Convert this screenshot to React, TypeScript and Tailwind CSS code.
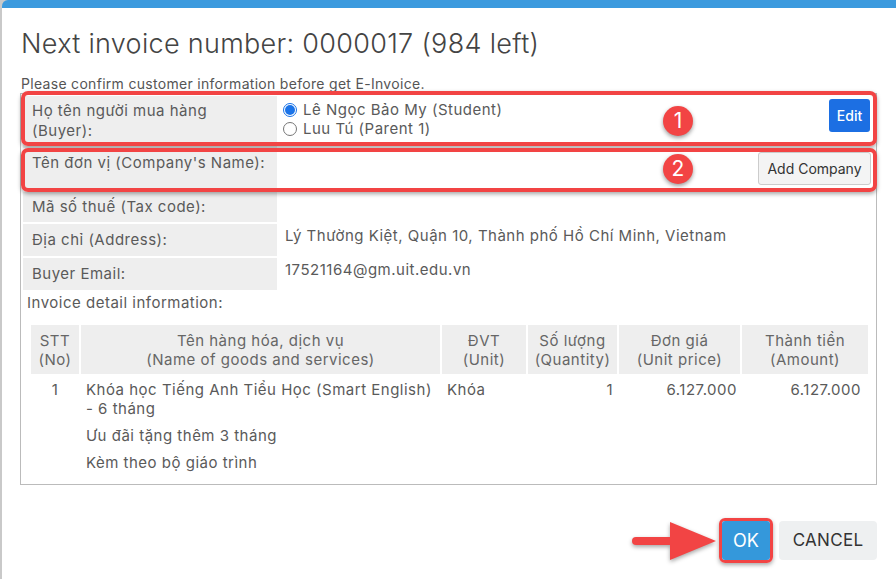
const red = "border-[#f24444]";

function InfoRow({
  label,
  children,
  className,
  labelClass,
}: {
  label: React.ReactNode;
  children?: React.ReactNode;
  className: string;
  labelClass: string;
}) {
  return (
    <div className={`flex ${className}`}>
      <div className={`w-[254px] shrink-0 bg-[#eeeeee] pl-[9px] leading-[20px] ${labelClass}`}>
        {label}
      </div>
      <div className="flex-1">{children}</div>
    </div>
  );
}

function Radio({ checked, label }: { checked?: boolean; label: string }) {
  return (
    <label className="flex items-center gap-[6px] leading-[19px]">
      {checked ? (
        <span className="flex h-[14px] w-[14px] items-center justify-center rounded-full border border-[#1a73e8] bg-white">
          <span className="h-[10px] w-[10px] rounded-full bg-[#1a73e8]" />
        </span>
      ) : (
        <span className="h-[14px] w-[14px] rounded-full border border-[#767676] bg-white" />
      )}
      {label}
    </label>
  );
}

function Arrow() {
  return (
    <svg width="88" height="44" viewBox="0 0 88 44" className="drop-shadow-[0_2px_2px_rgba(0,0,0,0.35)]">
      <rect x="2" y="18" width="50" height="8" rx="4" fill="#f24444" />
      <polygon points="40,3 86,22 40,41" fill="#f24444" />
    </svg>
  );
}

export default function App() {
  const headers = [
    { w: "w-[48px]", a: "STT", b: "(No)" },
    { w: "w-[359px]", a: "Tên hàng hóa, dịch vụ", b: "(Name of goods and services)" },
    { w: "w-[84px]", a: "ĐVT", b: "(Unit)" },
    { w: "w-[89px]", a: "Số lượng", b: "(Quantity)" },
    { w: "w-[121px]", a: "Đơn giá", b: "(Unit price)" },
    { w: "w-[126px]", a: "Thành tiền", b: "(Amount)" },
  ];

  return (
    <div className="relative flex h-[579px] w-[896px] overflow-hidden bg-[#c9c9c9] font-['Inter',sans-serif] text-[#5a5a5a]">
      <div className="ml-[2px] flex-1 rounded-tl-[6px] border-t-[8px] border-[#3c9ade] bg-white">
        <h1 className="mt-[19px] pl-[19px] text-[27px] font-light leading-[33px] tracking-[0.3px] text-[#444]">
          Next invoice number: 0000017 (984 left)
        </h1>
        <p className="mt-[16px] pl-[19px] text-[14px] leading-[16px] tracking-[0.3px] text-[#555]">
          Please confirm customer information before get E-Invoice.
        </p>

        <div className="mt-[1px] ml-[18px] w-[857px] border border-[#bbbbbb] p-[2px] text-[15px] tracking-[0.5px]">
          <div className="flex flex-col gap-[2px]">
            <InfoRow className="h-[52px]" labelClass="pt-[5px]" label={<>Họ tên người mua hàng<br />(Buyer):</>}>
              <div className="flex justify-between">
                <div className="pl-[6px] pt-[4px]">
                  <Radio checked label="Lê Ngọc Bảo My (Student)" />
                  <Radio label="Luu Tú (Parent 1)" />
                </div>
                <button className="mt-[3px] mr-[4px] h-[33px] w-[41px] rounded-[3px] bg-[#1c6fe3] text-[14px] font-medium tracking-normal text-white">
                  Edit
                </button>
              </div>
            </InfoRow>
            <InfoRow className="h-[40px]" labelClass="pt-[3px]" label="Tên đơn vị (Company's Name):">
              <div className="flex justify-end">
                <button className="mt-[2px] mr-[3px] h-[33px] w-[113px] rounded-[3px] border border-[#cccccc] bg-[#f4f4f4] text-[14px] tracking-normal text-[#333]">
                  Add Company
                </button>
              </div>
            </InfoRow>
            <InfoRow className="h-[30px]" labelClass="pt-[5px]" label="Mã số thuế (Tax code):" />
            <InfoRow className="h-[32px]" labelClass="pt-[6px]" label="Địa chỉ (Address):">
              <div className="pl-2 pt-[2px] leading-[20px]">Lý Thường Kiệt, Quận 10, Thành phố Hồ Chí Minh, Vietnam</div>
            </InfoRow>
            <InfoRow className="h-[32px]" labelClass="pt-[6px]" label="Buyer Email:">
              <div className="pl-2 pt-[2px] leading-[20px]">17521164@gm.uit.edu.vn</div>
            </InfoRow>
          </div>

          <p className="mt-[3px] pl-[4px] leading-[20px]">Invoice detail information:</p>

          <table className="mt-[10px] mb-[8px] ml-[6px] w-[841px] border-separate border-spacing-[2px] leading-[19px]">
            <thead>
              <tr>
                {headers.map((h) => (
                  <th key={h.a} className={`${h.w} bg-[#eeeeee] pt-[6px] pb-[5px] text-center font-normal leading-[19px] text-[#666]`}>
                    {h.a}
                    <br />
                    {h.b}
                  </th>
                ))}
              </tr>
            </thead>
            <tbody>
              <tr className="align-top">
                <td className="pt-[4px] text-center">1</td>
                <td className="px-[5px] pt-[4px]">
                  <div className="flex flex-col gap-[8px]">
                    <p>
                      Khóa học Tiếng Anh Tiểu Học (Smart English)
                      <br />- 6 tháng
                    </p>
                    <p>Ưu đãi tặng thêm 3 tháng</p>
                    <p>Kèm theo bộ giáo trình</p>
                  </div>
                </td>
                <td className="px-[5px] pt-[4px]">Khóa</td>
                <td className="pr-[4px] pt-[4px] text-right">1</td>
                <td className="pr-[3px] pt-[4px] text-right">6.127.000</td>
                <td className="pr-[7px] pt-[4px] text-right">6.127.000</td>
              </tr>
            </tbody>
          </table>
        </div>

        <div className="mt-[33px] flex items-center justify-end pr-[19px]">
          <Arrow />
          <div className={`ml-[1px] rounded-[6px] border-[3px] ${red} shadow-[0_2px_4px_rgba(0,0,0,0.35)]`}>
            <button className="h-[39px] w-[48px] rounded-[3px] bg-[#3498db] text-[18px] text-white">OK</button>
          </div>
          <button className="ml-[6px] h-[39px] w-[98px] rounded-[4px] bg-[#eef0f1] text-[17px] tracking-[0.3px] text-[#333]">CANCEL</button>
        </div>
      </div>

      {/* annotations */}
      <div className={`absolute left-[21px] top-[91px] h-[55px] w-[856px] rounded-[7px] border-[4px] ${red} shadow-[0_2px_4px_rgba(0,0,0,0.35)]`} />
      <div className={`absolute left-[21px] top-[148px] h-[44px] w-[856px] rounded-[7px] border-[4px] ${red} shadow-[0_2px_4px_rgba(0,0,0,0.35)]`} />
      <div className="absolute left-[663px] top-[106px] flex h-[30px] w-[30px] items-center justify-center rounded-full bg-[#f24444] text-[21px] text-white shadow-[0_2px_4px_rgba(0,0,0,0.4)]">
        1
      </div>
      <div className="absolute left-[663px] top-[154px] flex h-[30px] w-[30px] items-center justify-center rounded-full bg-[#f24444] text-[21px] text-white shadow-[0_2px_4px_rgba(0,0,0,0.4)]">
        2
      </div>
    </div>
  );
}
